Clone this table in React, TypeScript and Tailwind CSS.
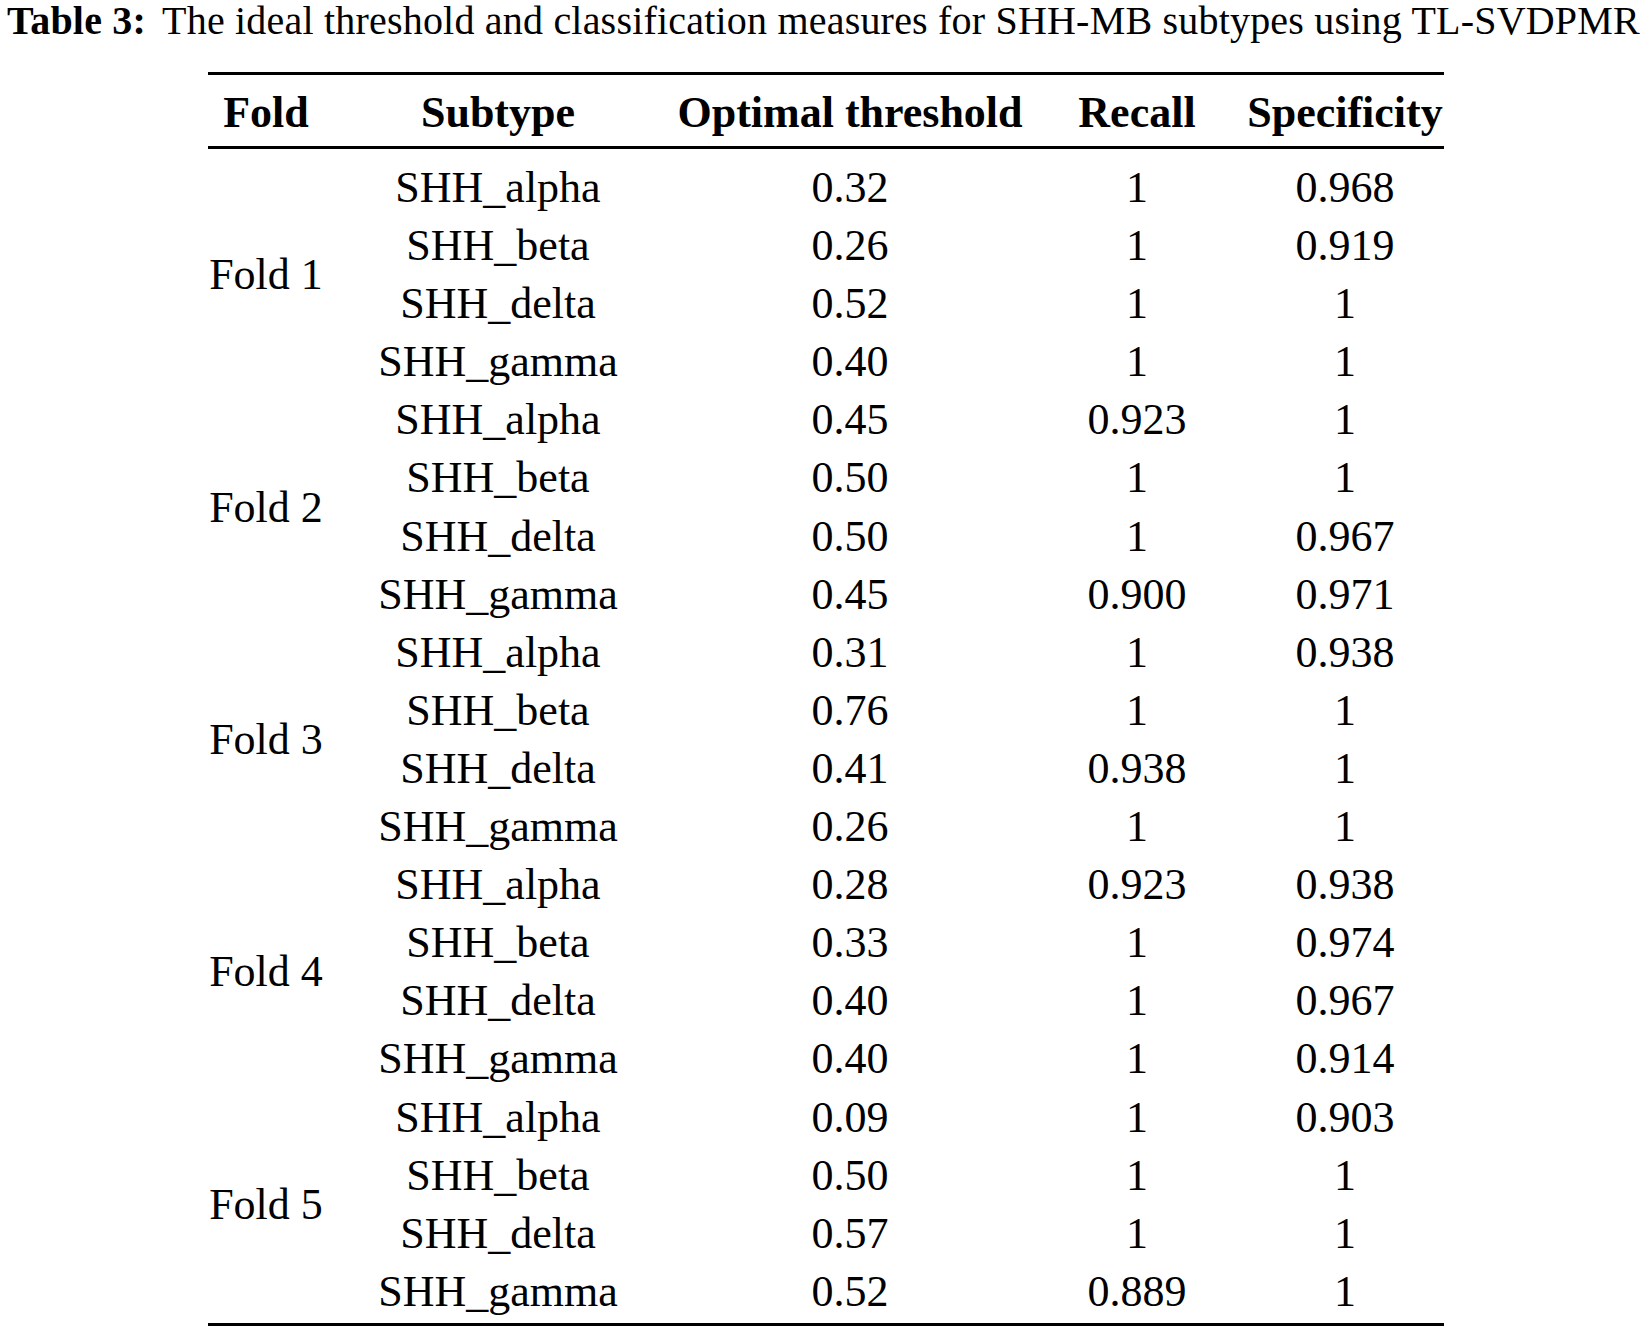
const folds = [
  {
    label: 'Fold 1',
    rows: [
      ['SHH_alpha', '0.32', '1', '0.968'],
      ['SHH_beta', '0.26', '1', '0.919'],
      ['SHH_delta', '0.52', '1', '1'],
      ['SHH_gamma', '0.40', '1', '1'],
    ],
  },
  {
    label: 'Fold 2',
    rows: [
      ['SHH_alpha', '0.45', '0.923', '1'],
      ['SHH_beta', '0.50', '1', '1'],
      ['SHH_delta', '0.50', '1', '0.967'],
      ['SHH_gamma', '0.45', '0.900', '0.971'],
    ],
  },
  {
    label: 'Fold 3',
    rows: [
      ['SHH_alpha', '0.31', '1', '0.938'],
      ['SHH_beta', '0.76', '1', '1'],
      ['SHH_delta', '0.41', '0.938', '1'],
      ['SHH_gamma', '0.26', '1', '1'],
    ],
  },
  {
    label: 'Fold 4',
    rows: [
      ['SHH_alpha', '0.28', '0.923', '0.938'],
      ['SHH_beta', '0.33', '1', '0.974'],
      ['SHH_delta', '0.40', '1', '0.967'],
      ['SHH_gamma', '0.40', '1', '0.914'],
    ],
  },
  {
    label: 'Fold 5',
    rows: [
      ['SHH_alpha', '0.09', '1', '0.903'],
      ['SHH_beta', '0.50', '1', '1'],
      ['SHH_delta', '0.57', '1', '1'],
      ['SHH_gamma', '0.52', '0.889', '1'],
    ],
  },
];

const headers = ['Fold', 'Subtype', 'Optimal threshold', 'Recall', 'Specificity'];

export default function App() {
  return (
    <div className="w-[1652px] h-[1329px] bg-white text-black font-['Liberation_Serif',serif]">
      <p className="pl-[7px] text-[40px] leading-[42px] tracking-[0.2px] whitespace-nowrap">
        <span className="font-bold">Table 3:</span>
        <span className="ml-[16px]">The ideal threshold and classification measures for SHH-MB subtypes using TL-SVDPMR</span>
      </p>

      <div className="mx-auto mt-[30px] w-[1236px] border-t-[3px] border-b-[3px] border-black text-[44px]">
        <div className="grid grid-cols-[116px_348px_356px_218px_198px] border-b-[3px] border-black pt-[9px] pb-[4px] font-bold leading-[58px] text-center">
          {headers.map((h) => (
            <div key={h} className="whitespace-nowrap">{h}</div>
          ))}
        </div>

        <div className="pt-[10px] pb-[2px]">
          {folds.map((fold) => (
            <div key={fold.label} className="flex">
              <div className="w-[116px] flex items-center justify-center whitespace-nowrap">{fold.label}</div>
              <div className="flex flex-col">
                {fold.rows.map((r, i) => (
                  <div key={i} className="grid grid-cols-[348px_356px_218px_198px] text-center leading-[58.1px] h-[58.1px]">
                    {r.map((c, j) => (
                      <div key={j} className="whitespace-nowrap">{c}</div>
                    ))}
                  </div>
                ))}
              </div>
            </div>
          ))}
        </div>
      </div>
    </div>
  );
}
